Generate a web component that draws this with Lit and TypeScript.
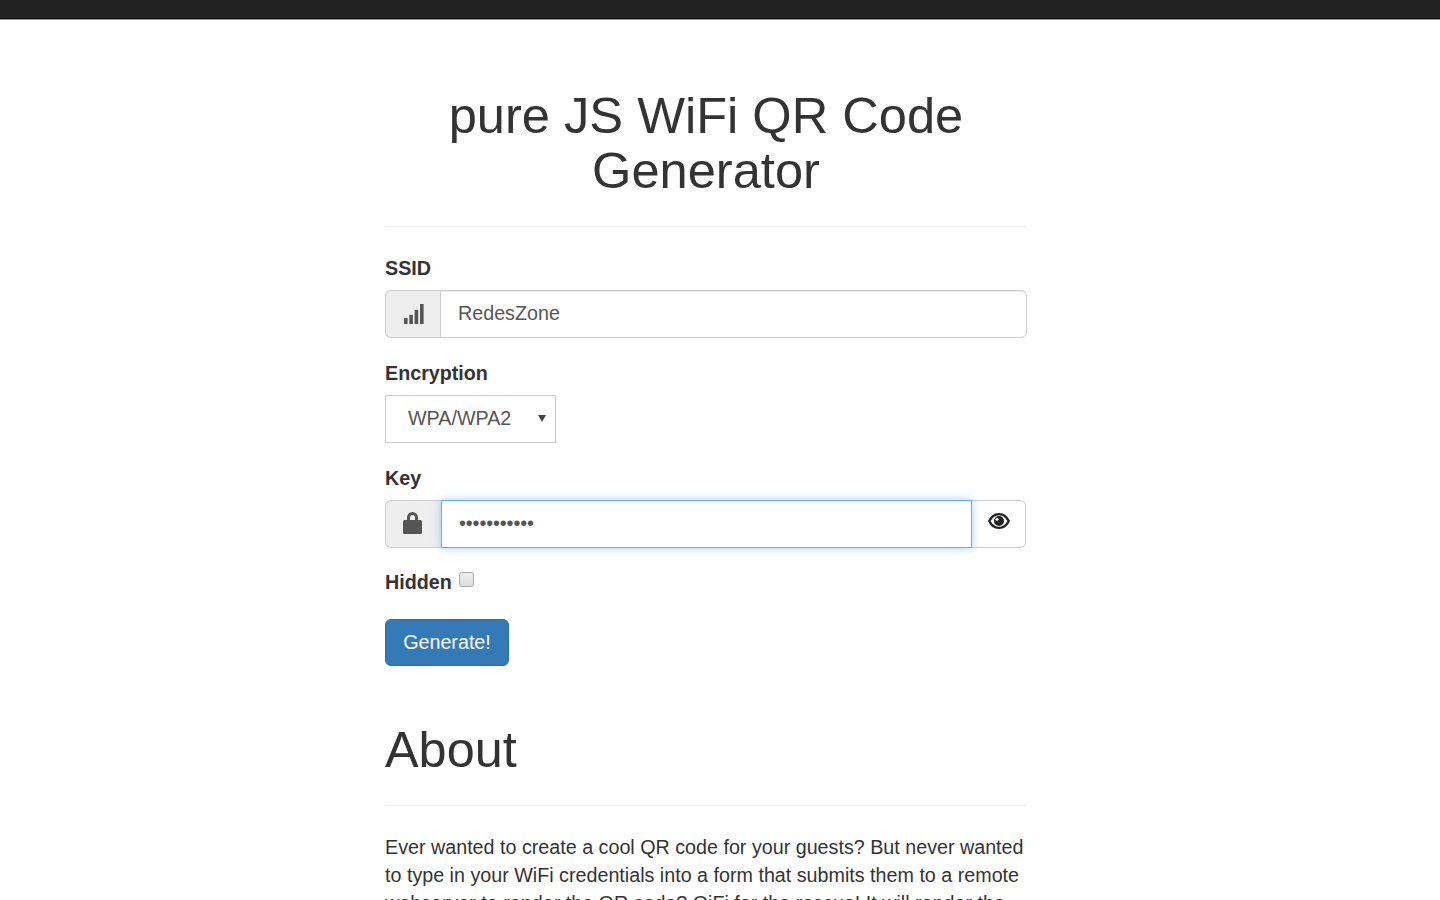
import { LitElement, html, css } from "lit";
import { customElement } from "lit/decorators.js";

@customElement("app-root")
export class AppRoot extends LitElement {
  static styles = css`
    :host { display: block; height: 900px; overflow: hidden; background: #fff; color: #333;
      font-family: "Liberation Sans", Arial, sans-serif; font-size: 19.72px; line-height: 28px; }
    * { box-sizing: border-box; }
    .bar { height: 19px; background: #222; border-bottom: 1px solid #080808; box-shadow: 0 1px 0 #999; }
    .main { width: 642px; margin-left: 385px; padding-top: 69px; }
    h1 { margin: 0; font-weight: 400; color: #333; }
    .title { font-size: 50.6px; line-height: 55px; text-align: center; padding: 0 40px; }
    hr { border: 0; border-top: 1px solid #eee; margin: 0; }
    .title-rule { margin: 28px 0 27px; }
    .group { margin-bottom: 21px; }
    label { display: block; font-weight: 700; margin-bottom: 8px; line-height: 28px; color: #333; }
    .input-group { display: flex; height: 48px; }
    .addon { width: 55px; flex: none; display: flex; align-items: center; justify-content: center; background: #eee;
      border: 1px solid #ccc; border-right: 0; border-radius: 6px 0 0 6px; color: #555; padding-left: 2px; }
    .lock { width: 56px; padding: 0 3px 2px 0; }
    .field { flex: 1; border: 1px solid #ccc; border-radius: 0 6px 6px 0; padding: 0 17px 2px; display: flex;
      align-items: center; color: #555; background: #fff; box-shadow: inset 0 1px 1px rgba(0,0,0,.075); }
    .focus { border: 1px solid #66afe9; border-radius: 0; position: relative;
      box-shadow: inset 0 1px 1px rgba(0,0,0,.075), 0 0 8px rgba(102,175,233,.6); }
    .dots { letter-spacing: -0.1px; color: #555; }
    .eye { width: 54px; flex: none; display: flex; align-items: center; justify-content: center; border: 1px solid #ccc; border-left: 0;
      border-radius: 0 6px 6px 0; background: #fff; padding-bottom: 6px; margin-right: 1px; }
    .select { width: 171px; height: 48px; border: 1px solid #ccc; display: flex; align-items: center;
      padding: 0 0 2px 22px; color: #555; position: relative; background: #fff; }
    .caret { position: absolute; right: 9px; top: 19px; width: 0; height: 0; border-left: 4px solid transparent;
      border-right: 4px solid transparent; border-top: 7px solid #444; }
    .hidden-row { display: flex; align-items: flex-start; height: 51px; margin-top: -1px; }
    .hidden-row label { margin: 0; }
    .check { width: 15px; height: 15px; margin: 4px 0 0 7px; border: 1px solid #aaa; border-radius: 3px;
      background: linear-gradient(#eee, #ddd); }
    .btn { display: inline-flex; align-items: center; justify-content: center; width: 124px; height: 47px; background: #337ab7;
      border: 1px solid #2e6da4; border-radius: 6px; color: #fff; padding-bottom: 2px; }
    .about { font-size: 50.4px; line-height: 55px; margin-top: 56px; }
    .about-rule { margin: 28px 0 27px; }
    p { margin: 0; }
  `;

  render() {
    return html`
      <div class="bar"></div>
      <div class="main">
        <h1 class="title">pure JS WiFi QR Code Generator</h1>
        <hr class="title-rule" />
        <div class="group">
          <label>SSID</label>
          <div class="input-group">
            <span class="addon">
              <svg width="20" height="22" viewBox="0 0 20 22" fill="#555">
                <rect x="0" y="15" width="3.6" height="6" /><rect x="5.300" y="12" width="3.600" height="9" />
                <rect x="10.600" y="7" width="3.600" height="14" /><rect x="16" y="1" width="3.600" height="20" />
              </svg>
            </span>
            <div class="field">RedesZone</div>
          </div>
        </div>
        <div class="group">
          <label>Encryption</label>
          <div class="select">WPA/WPA2<span class="caret"></span></div>
        </div>
        <div class="group">
          <label>Key</label>
          <div class="input-group">
            <span class="addon lock">
              <svg width="19" height="22" viewBox="0 0 19 22">
                <path fill="#555" fill-rule="evenodd" d="M4 8V5.500a5.500 5.500 0 0 1 11 0V8h2.500a1.500 1.500 0 0 1 1.500 1.500v11a1.500 1.500 0 0 1-1.500 1.500h-16A1.500 1.500 0 0 1 0 20.500v-11A1.500 1.500 0 0 1 1.500 8zM7 8h5V5.500a2.500 2.500 0 0 0-5 0z"/>
              </svg>
            </span>
            <div class="field focus"><span class="dots">•••••••••••</span></div>
            <span class="eye">
              <svg width="22" height="16" viewBox="0 0 22 16">
                <path fill="#222" fill-rule="evenodd" d="M11 0C6 0 2.200 3 0 8c2.200 5 6 8 11 8s8.800-3 11-8c-2.200-5-6-8-11-8zM11 2.200c3.600 0 6.500 2.200 8.400 5.800-1.900 3.600-4.800 5.800-8.400 5.800S4.500 11.600 2.600 8C4.500 4.400 7.400 2.200 11 2.200z"/>
                <circle cx="11" cy="8" r="5" fill="#222"/><circle cx="9" cy="6.300" r="1.500" fill="#fff"/>
              </svg>
            </span>
          </div>
        </div>
        <div class="hidden-row"><label>Hidden</label><span class="check"></span></div>
        <div class="btn">Generate!</div>
        <h1 class="about">About</h1>
        <hr class="about-rule" />
        <p>Ever wanted to create a cool QR code for your guests? But never wanted to type in your WiFi credentials into a form that submits them to a remote webserver to render the QR code? QiFi for the rescue! It will render the QR code in your browser.</p>
      </div>
    `;
  }
}
